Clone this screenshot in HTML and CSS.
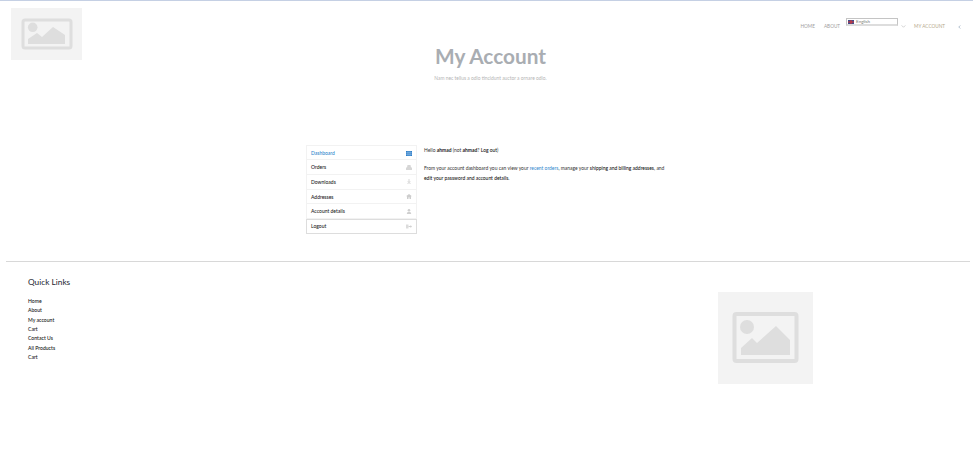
FILE: index.html
```html
<!DOCTYPE html>
<html lang="en">
<head>
<meta charset="utf-8">
<title>My Account</title>
<link rel="stylesheet" href="styles.css">
</head>
<body>
<header class="site-header">
  <a class="logo" href="#">
    <svg viewBox="0 0 71 52" width="71" height="52"><rect width="71" height="52" fill="#f3f3f3"/><rect x="12" y="12" width="48" height="28" rx="2" fill="none" stroke="#dedede" stroke-width="3"/><circle cx="21.700" cy="19.300" r="4.800" fill="#dedede"/><path d="M17 36V31L26 25L31 29L42 19L54 27V36z" fill="#dedede"/></svg>
  </a>
  <nav class="nav">
    <a href="#" class="nav-link">HOME</a>
    <a href="#" class="nav-link">ABOUT</a>
    <span class="lang"><svg class="flag" viewBox="0 0 6 4" width="6" height="4"><rect width="6" height="4" fill="#3d4f8f"/><path d="M0 1.500h6v1H0z" fill="#d33"/><path d="M2.500 0h1v4h-1z" fill="#d33"/></svg>English</span>
    <svg class="chev" viewBox="0 0 6 4" width="5" height="3"><path d="M.5.5 3 3 5.500.5" fill="none" stroke="#b5b5b5" stroke-width=".8"/></svg>
    <a href="#" class="nav-link active">MY ACCOUNT</a>
    <svg class="cart" viewBox="0 0 4 5" width="3" height="4"><path d="M3 .5 1 2.500 3 4.500" fill="none" stroke="#9fb0c2" stroke-width="1.100"/></svg>
  </nav>
  <div class="hero">
    <h1 class="title">My Account</h1>
    <p class="subtitle">Nam nec tellus a odio tincidunt auctor a ornare odio.</p>
  </div>
</header>

<main class="account">
  <ul class="menu">
    <li class="menu-item current"><a href="#">Dashboard</a>
      <svg viewBox="0 0 6 5" width="6" height="5"><path d="M0 0h6v5H0z" fill="#2f7fc9"/><path d="M0 1.700h6M0 3.300h6M2 0v5M4 0v5" stroke="#cfe2f5" stroke-width=".35"/></svg></li>
    <li class="menu-item"><a href="#">Orders</a>
      <svg viewBox="0 0 6 5" width="6" height="5"><path d="M1.500 0h3l.5 2.500H6V5H0V2.500h1z" fill="#d6d6d6"/></svg></li>
    <li class="menu-item"><a href="#">Downloads</a>
      <svg viewBox="0 0 6 5" width="6" height="5"><path d="M2.500 0h1v2.500H5L3 4.300 1 2.500h1.500zM1 4.500h4V5H1z" fill="#d8d8d8"/></svg></li>
    <li class="menu-item"><a href="#">Addresses</a>
      <svg viewBox="0 0 6 5" width="6" height="5"><path d="M3 0 6 2.300H5V5H3.500V3.300h-1V5H1V2.300H0z" fill="#cdcdcd"/></svg></li>
    <li class="menu-item"><a href="#">Account details</a>
      <svg viewBox="0 0 6 5" width="6" height="5"><circle cx="3" cy="1.300" r="1.300" fill="#cfcfcf"/><path d="M.8 5c0-1.500 1-2.300 2.200-2.300S5.200 3.500 5.200 5z" fill="#cfcfcf"/></svg></li>
    <li class="menu-item logout"><a href="#">Logout</a>
      <svg viewBox="0 0 6 5" width="6" height="5"><path d="M0 .5h2.500v4H0z" fill="#dcdcdc"/><path d="M2.500 2h2V1L6 2.500 4.500 4V3h-2z" fill="#d0d0d0"/></svg></li>
  </ul>
  <div class="content">
    <p>Hello <strong>ahmad</strong> (not <strong>ahmad</strong>? <a href="#" class="plain">Log out</a>)</p>
    <p>From your account dashboard you can view your <a href="#" class="link">recent orders</a>, manage your <a href="#" class="plain">shipping and billing addresses</a>, and <a href="#" class="plain">edit your password and account details</a>.</p>
  </div>
</main>

<footer class="footer">
  <div class="footer-inner">
    <div class="links">
      <h2 class="links-title">Quick Links</h2>
      <ul class="link-list">
        <li><a href="#">Home</a></li>
        <li><a href="#">About</a></li>
        <li><a href="#">My account</a></li>
        <li><a href="#">Cart</a></li>
        <li><a href="#">Contact Us</a></li>
        <li><a href="#">All Products</a></li>
        <li><a href="#">Cart</a></li>
      </ul>
    </div>
    <svg class="footer-img" viewBox="0 0 95 92" width="95" height="92"><rect width="95" height="92" fill="#f3f3f3"/><rect x="16.500" y="22" width="62" height="47" rx="2" fill="none" stroke="#dedede" stroke-width="4"/><circle cx="29" cy="35" r="7" fill="#dedede"/><path d="M23 63V56L34 46L39 51L58 34L72 48V63z" fill="#dedede"/></svg>
  </div>
</footer>
</body>
</html>
```
FILE: styles.css
```css
* { box-sizing: border-box; }
html, body { margin: 0; padding: 0; }
body {
  width: 973px;
  height: 461px;
  overflow: hidden;
  background: #fff;
  color: #222;
  font-family: Lato, "Liberation Sans", sans-serif;
  border-top: 1px solid #c5d0e4;
}
a { color: inherit; text-decoration: none; }
ul { list-style: none; margin: 0; padding: 0; }
p, h1, h2 { margin: 0; }

.site-header {
  display: grid;
  grid-template-columns: 1fr;
  height: 143px;
  padding: 7px 0 0 11px;
}
.site-header > * { grid-row: 1; grid-column: 1; }
.logo { display: block; width: 71px; height: 52px; justify-self: start; align-self: start; }
.logo svg, .footer-img { display: block; }

.nav {
  justify-self: end;
  align-self: start;
  display: flex;
  align-items: flex-start;
  margin-top: 10px;
  padding-right: 12px;
  font-size: 4.700px;
  color: #a0a0a0;
}
.nav-link { margin-top: 5px; line-height: 6px; }
.nav-link + .nav-link { margin-left: 9px; }
.active { color: #b5a98c; margin-left: 8px; }
.lang {
  display: flex;
  align-items: center;
  gap: 2px;
  width: 52px;
  height: 8px;
  margin-left: 6px;
  padding-left: 1px;
  border: 1px solid #c4c4c4;
  border-bottom-width: 2px;
  border-bottom-color: #ddd;
  font-size: 4.500px;
  color: #777;
  background: #fff;
}
.chev { margin: 7px 0 0 3px; }
.cart { margin: 7px 0 0 13px; }

.hero {
  justify-self: center;
  margin: 37px 0 0 -3px;
  text-align: center;
}
.title { font-size: 20.800px; line-height: 22px; font-weight: 700; color: #a9adb2; }
.subtitle { margin-top: 7px; font-size: 4.900px; line-height: 8px; color: #b4b4b4; }

.account {
  display: flex;
  height: 117px;
  padding-left: 306px;
}
.menu {
  width: 111px;
  height: 90px;
  margin-top: 1px;
  font-size: 5px;
}
.menu-item {
  display: flex;
  align-items: center;
  justify-content: space-between;
  height: 14.700px;
  padding: 0 4px;
  border: 1px solid #f2f2f2;
  border-width: 0 1px 1px;
  color: #222;
  font-weight: 500;
}
.menu-item:first-child { height: 15.400px; padding-top: 1px; border-top: 1px solid #f2f2f2; }
.current { color: #2f86cc; }
.logout { border: 1px solid #ddd; height: 14.600px; }
.content {
  width: 245px;
  margin-left: 7px;
  padding-top: 1px;
  font-size: 4.950px;
  line-height: 10px;
  color: #333;
}
.content p + p { margin-top: 7.500px; }
.content strong { font-weight: 700; color: #222; }
.link { color: #2f86cc; }
.plain { color: #111; font-weight: 500; }

.footer { margin: 0 3px 0 6px; border-top: 1px solid #d8d8d8; }
.footer-inner {
  display: flex;
  justify-content: space-between;
  padding: 30px 157px 0 22px;
}
.links { margin-top: -16px; }
.links-title { font-size: 8.300px; line-height: 12px; font-weight: 400; color: #1d2530; }
.link-list { margin-top: 9px; font-size: 5.100px; line-height: 9.330px; color: #111; font-weight: 500; }
```
